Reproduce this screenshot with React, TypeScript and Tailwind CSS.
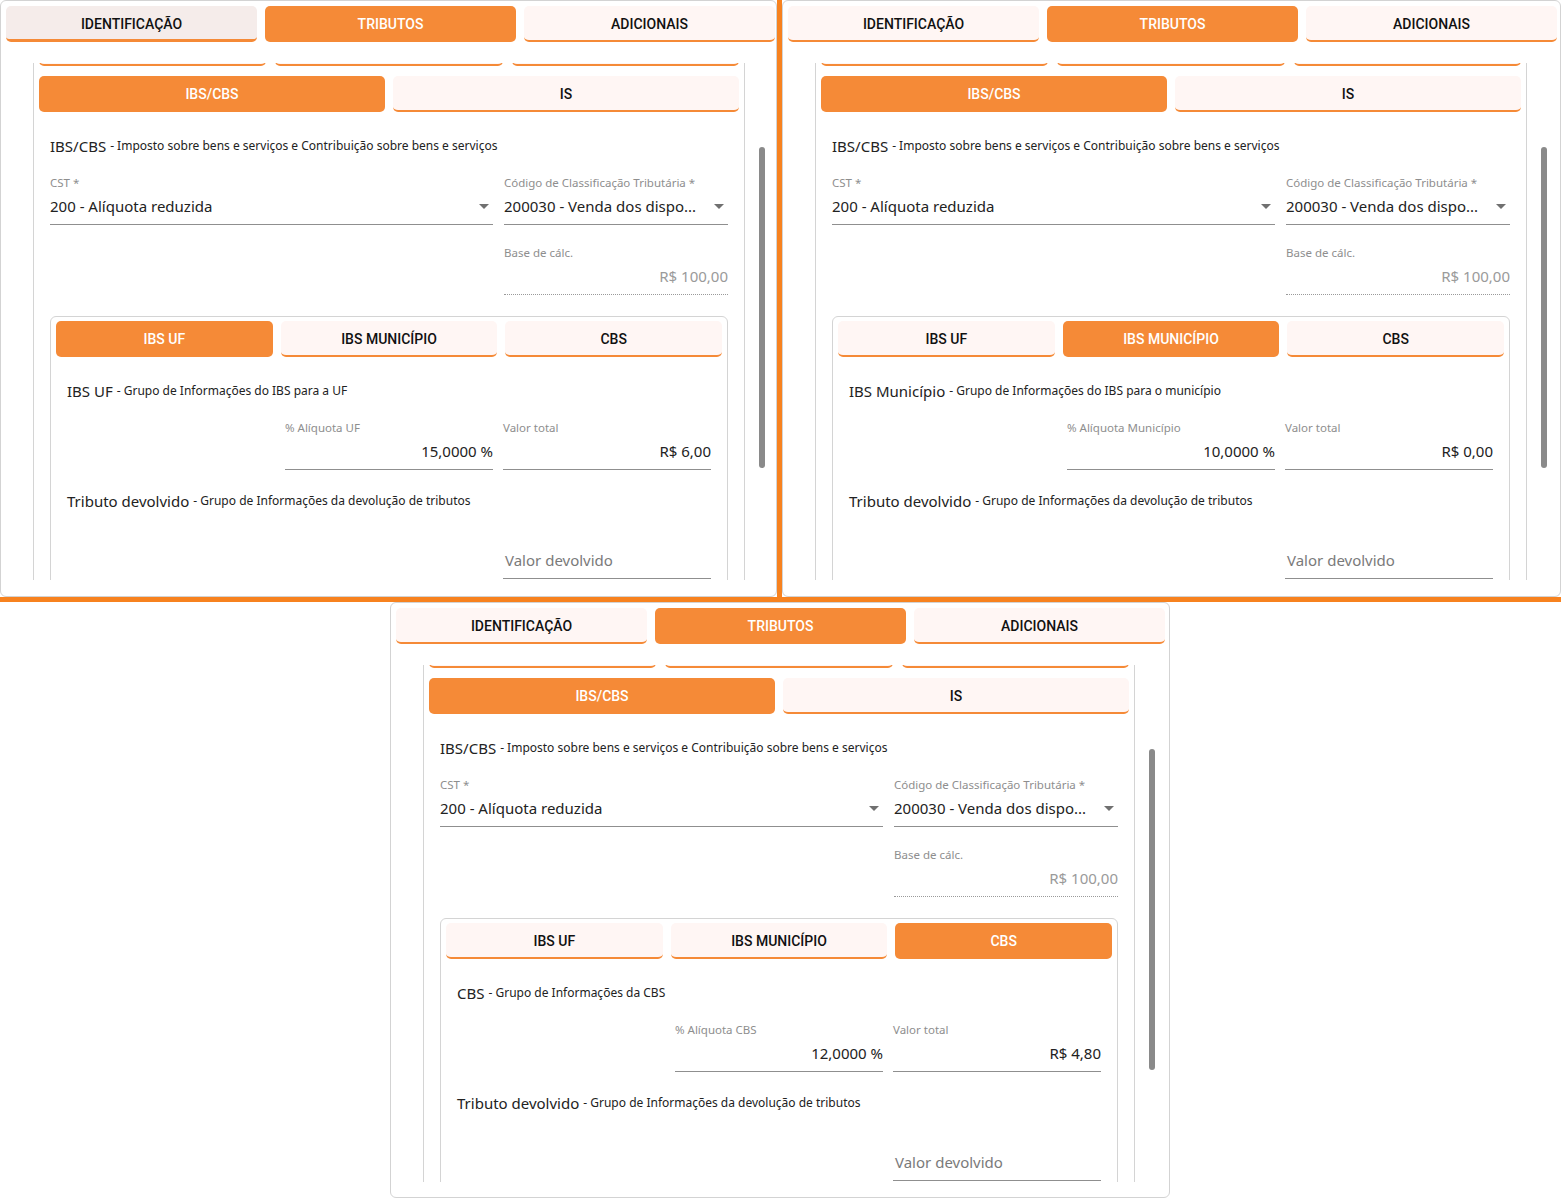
import React from "react";

type Variant = {
  active: number;
  title: string;
  desc: string;
  aliqLabel: string;
  aliq: string;
  total: string;
  hoverIdent: boolean;
};

const variants: Variant[] = [
  {
    active: 0,
    title: "IBS UF",
    desc: "Grupo de Informações do IBS para a UF",
    aliqLabel: "% Alíquota UF",
    aliq: "15,0000 %",
    total: "R$ 6,00",
    hoverIdent: true,
  },
  {
    active: 1,
    title: "IBS Município",
    desc: "Grupo de Informações do IBS para o município",
    aliqLabel: "% Alíquota Município",
    aliq: "10,0000 %",
    total: "R$ 0,00",
    hoverIdent: false,
  },
  {
    active: 2,
    title: "CBS",
    desc: "Grupo de Informações da CBS",
    aliqLabel: "% Alíquota CBS",
    aliq: "12,0000 %",
    total: "R$ 4,80",
    hoverIdent: false,
  },
];

const tabFont = { fontFamily: "Roboto, 'Liberation Sans', sans-serif" };
const bodyFont = { fontFamily: "'Noto Sans', 'Open Sans', sans-serif" };

function Tab({ label, active, hover }: { label: string; active?: boolean; hover?: boolean }) {
  if (active) {
    return (
      <div
        style={tabFont}
        className="h-[36px] rounded-[5px] bg-[#f58a37] text-white text-[14px] font-medium flex items-center justify-center"
      >
        {label}
      </div>
    );
  }
  if (hover) {
    return (
      <div
        style={tabFont}
        className="h-[36px] pt-[3px] rounded-[5px] bg-[#f5ecea] border-b-[3px] border-[#f58a37] text-[#111] text-[14px] font-medium flex items-center justify-center"
      >
        {label}
      </div>
    );
  }
  return (
    <div
      style={tabFont}
      className="h-[36px] pt-[2px] rounded-[5px] bg-[#fff6f4] border-b-2 border-[#f58a37] text-[#111] text-[14px] font-medium flex items-center justify-center"
    >
      {label}
    </div>
  );
}

function Caret() {
  return (
    <svg width="10" height="5" viewBox="0 0 10 5" className="shrink-0">
      <path d="M0 0 L10 0 L5 5 Z" fill="#707070" />
    </svg>
  );
}

function Field({
  label,
  value,
  right,
  caret,
  dotted,
  muted,
  placeholder,
}: {
  label?: string;
  value?: string;
  right?: boolean;
  caret?: boolean;
  dotted?: boolean;
  muted?: boolean;
  placeholder?: string;
}) {
  return (
    <div className="flex flex-col min-w-0">
      <div className="h-[14px] text-[11.5px] leading-[14px] text-[#8e8e8e] whitespace-nowrap">{label}</div>
      <div
        className={
          dotted
            ? "h-[35px] pb-[2px] flex items-center border-b border-dotted border-[#9a9a9a]"
            : "h-[35px] pb-[2px] flex items-center border-b border-[#8f8f8f]"
        }
      >
        {placeholder ? (
          <span className="pl-[2px] text-[15px] text-[#7a7a7a]">{placeholder}</span>
        ) : (
          <>
            <span
              className={
                right
                  ? muted
                    ? "flex-1 text-right text-[15px] text-[#9a9a9a] whitespace-nowrap"
                    : "flex-1 text-right text-[15px] text-[#222] whitespace-nowrap"
                  : "flex-1 text-[15px] text-[#222] whitespace-nowrap overflow-hidden"
              }
            >
              {value}
            </span>
            {caret && (
              <span className="ml-[6px] mr-[4px] flex items-center">
                <Caret />
              </span>
            )}
          </>
        )}
      </div>
    </div>
  );
}

function Panel({ v, width, height }: { v: Variant; width: string; height: string }) {
  return (
    <div
      style={bodyFont}
      className={`${width} ${height} shrink-0 border border-[#d3d3d3] rounded-[6px] bg-white overflow-hidden flex flex-col`}
    >
      <div className="ml-[5px] mt-[5px] grid grid-cols-[251px_251px_251px] gap-[8px]">
        <Tab label="IDENTIFICAÇÃO" hover={v.hoverIdent} />
        <Tab label="TRIBUTOS" active />
        <Tab label="ADICIONAIS" />
      </div>

      {/* scroll viewport */}
      <div className="ml-[32px] mt-[21px] h-[517px] overflow-hidden flex">
        <div className="w-[712px] shrink-0 border-l border-r border-[#d4d4d4] px-[5px]">
          <div className="-mt-[33px] grid grid-cols-3 gap-[9px]">
            <Tab label="" />
            <Tab label="" />
            <Tab label="" />
          </div>
          <div className="mt-[10px] grid grid-cols-2 gap-[8px]">
            <Tab label="IBS/CBS" active />
            <Tab label="IS" />
          </div>

          <div className="px-[11px] pt-[24px] flex flex-col">
            <div className="h-[20px] flex items-center text-[#222] whitespace-nowrap">
              <span className="text-[15px]">IBS/CBS</span>
              <span className="text-[12px] ml-[4px]">- Imposto sobre bens e serviços e Contribuição sobre bens e serviços</span>
            </div>

            <div className="mt-[20px] grid grid-cols-[443px_1fr] gap-[11px]">
              <Field label="CST *" value="200 - Alíquota reduzida" caret />
              <Field label="Código de Classificação Tributária *" value="200030 - Venda dos dispo..." caret />
            </div>

            <div className="mt-[21px] grid grid-cols-[443px_1fr] gap-[11px]">
              <div />
              <Field label="Base de cálc." value="R$ 100,00" right muted dotted />
            </div>

            <div className="mt-[21px] border border-[#d4d4d4] rounded-[6px]">
              <div className="px-[5px] pt-[4px] grid grid-cols-3 gap-[8px]">
                <Tab label="IBS UF" active={v.active === 0} />
                <Tab label="IBS MUNICÍPIO" active={v.active === 1} />
                <Tab label="CBS" active={v.active === 2} />
              </div>
              <div className="px-[16px] pt-[24px] flex flex-col">
                <div className="h-[20px] flex items-center text-[#222] whitespace-nowrap">
                  <span className="text-[15px]">{v.title}</span>
                  <span className="text-[12px] ml-[4px]">- {v.desc}</span>
                </div>
                <div className="mt-[20px] grid grid-cols-3 gap-[10px]">
                  <div />
                  <Field label={v.aliqLabel} value={v.aliq} right />
                  <Field label="Valor total" value={v.total} right />
                </div>
                <div className="mt-[21px] h-[20px] flex items-center text-[#222] whitespace-nowrap">
                  <span className="text-[15px]">Tributo devolvido</span>
                  <span className="text-[12px] ml-[4px]">- Grupo de Informações da devolução de tributos</span>
                </div>
                <div className="mt-[19px] grid grid-cols-3 gap-[10px]">
                  <div />
                  <div />
                  <Field placeholder="Valor devolvido" />
                </div>
                <div className="h-[40px]" />
              </div>
            </div>
          </div>
        </div>
        <div className="ml-[14px] mt-[84px] w-[6px] h-[321px] rounded-[3px] bg-[#8a8a8a] shrink-0" />
      </div>
    </div>
  );
}

export default function App() {
  return (
    <div className="w-[1561px] h-[1202px] bg-white overflow-hidden">
      <div className="flex h-[597px]">
        <Panel v={variants[0]} width="w-[777px]" height="h-[597px]" />
        <div className="w-[5px] h-[597px] bg-[#f7821f] shrink-0" />
        <Panel v={variants[1]} width="w-[779px]" height="h-[597px]" />
      </div>
      <div className="h-[5px] bg-[#f7821f]" />
      <div className="pl-[390px]">
        <Panel v={variants[2]} width="w-[780px]" height="h-[596px]" />
      </div>
    </div>
  );
}
